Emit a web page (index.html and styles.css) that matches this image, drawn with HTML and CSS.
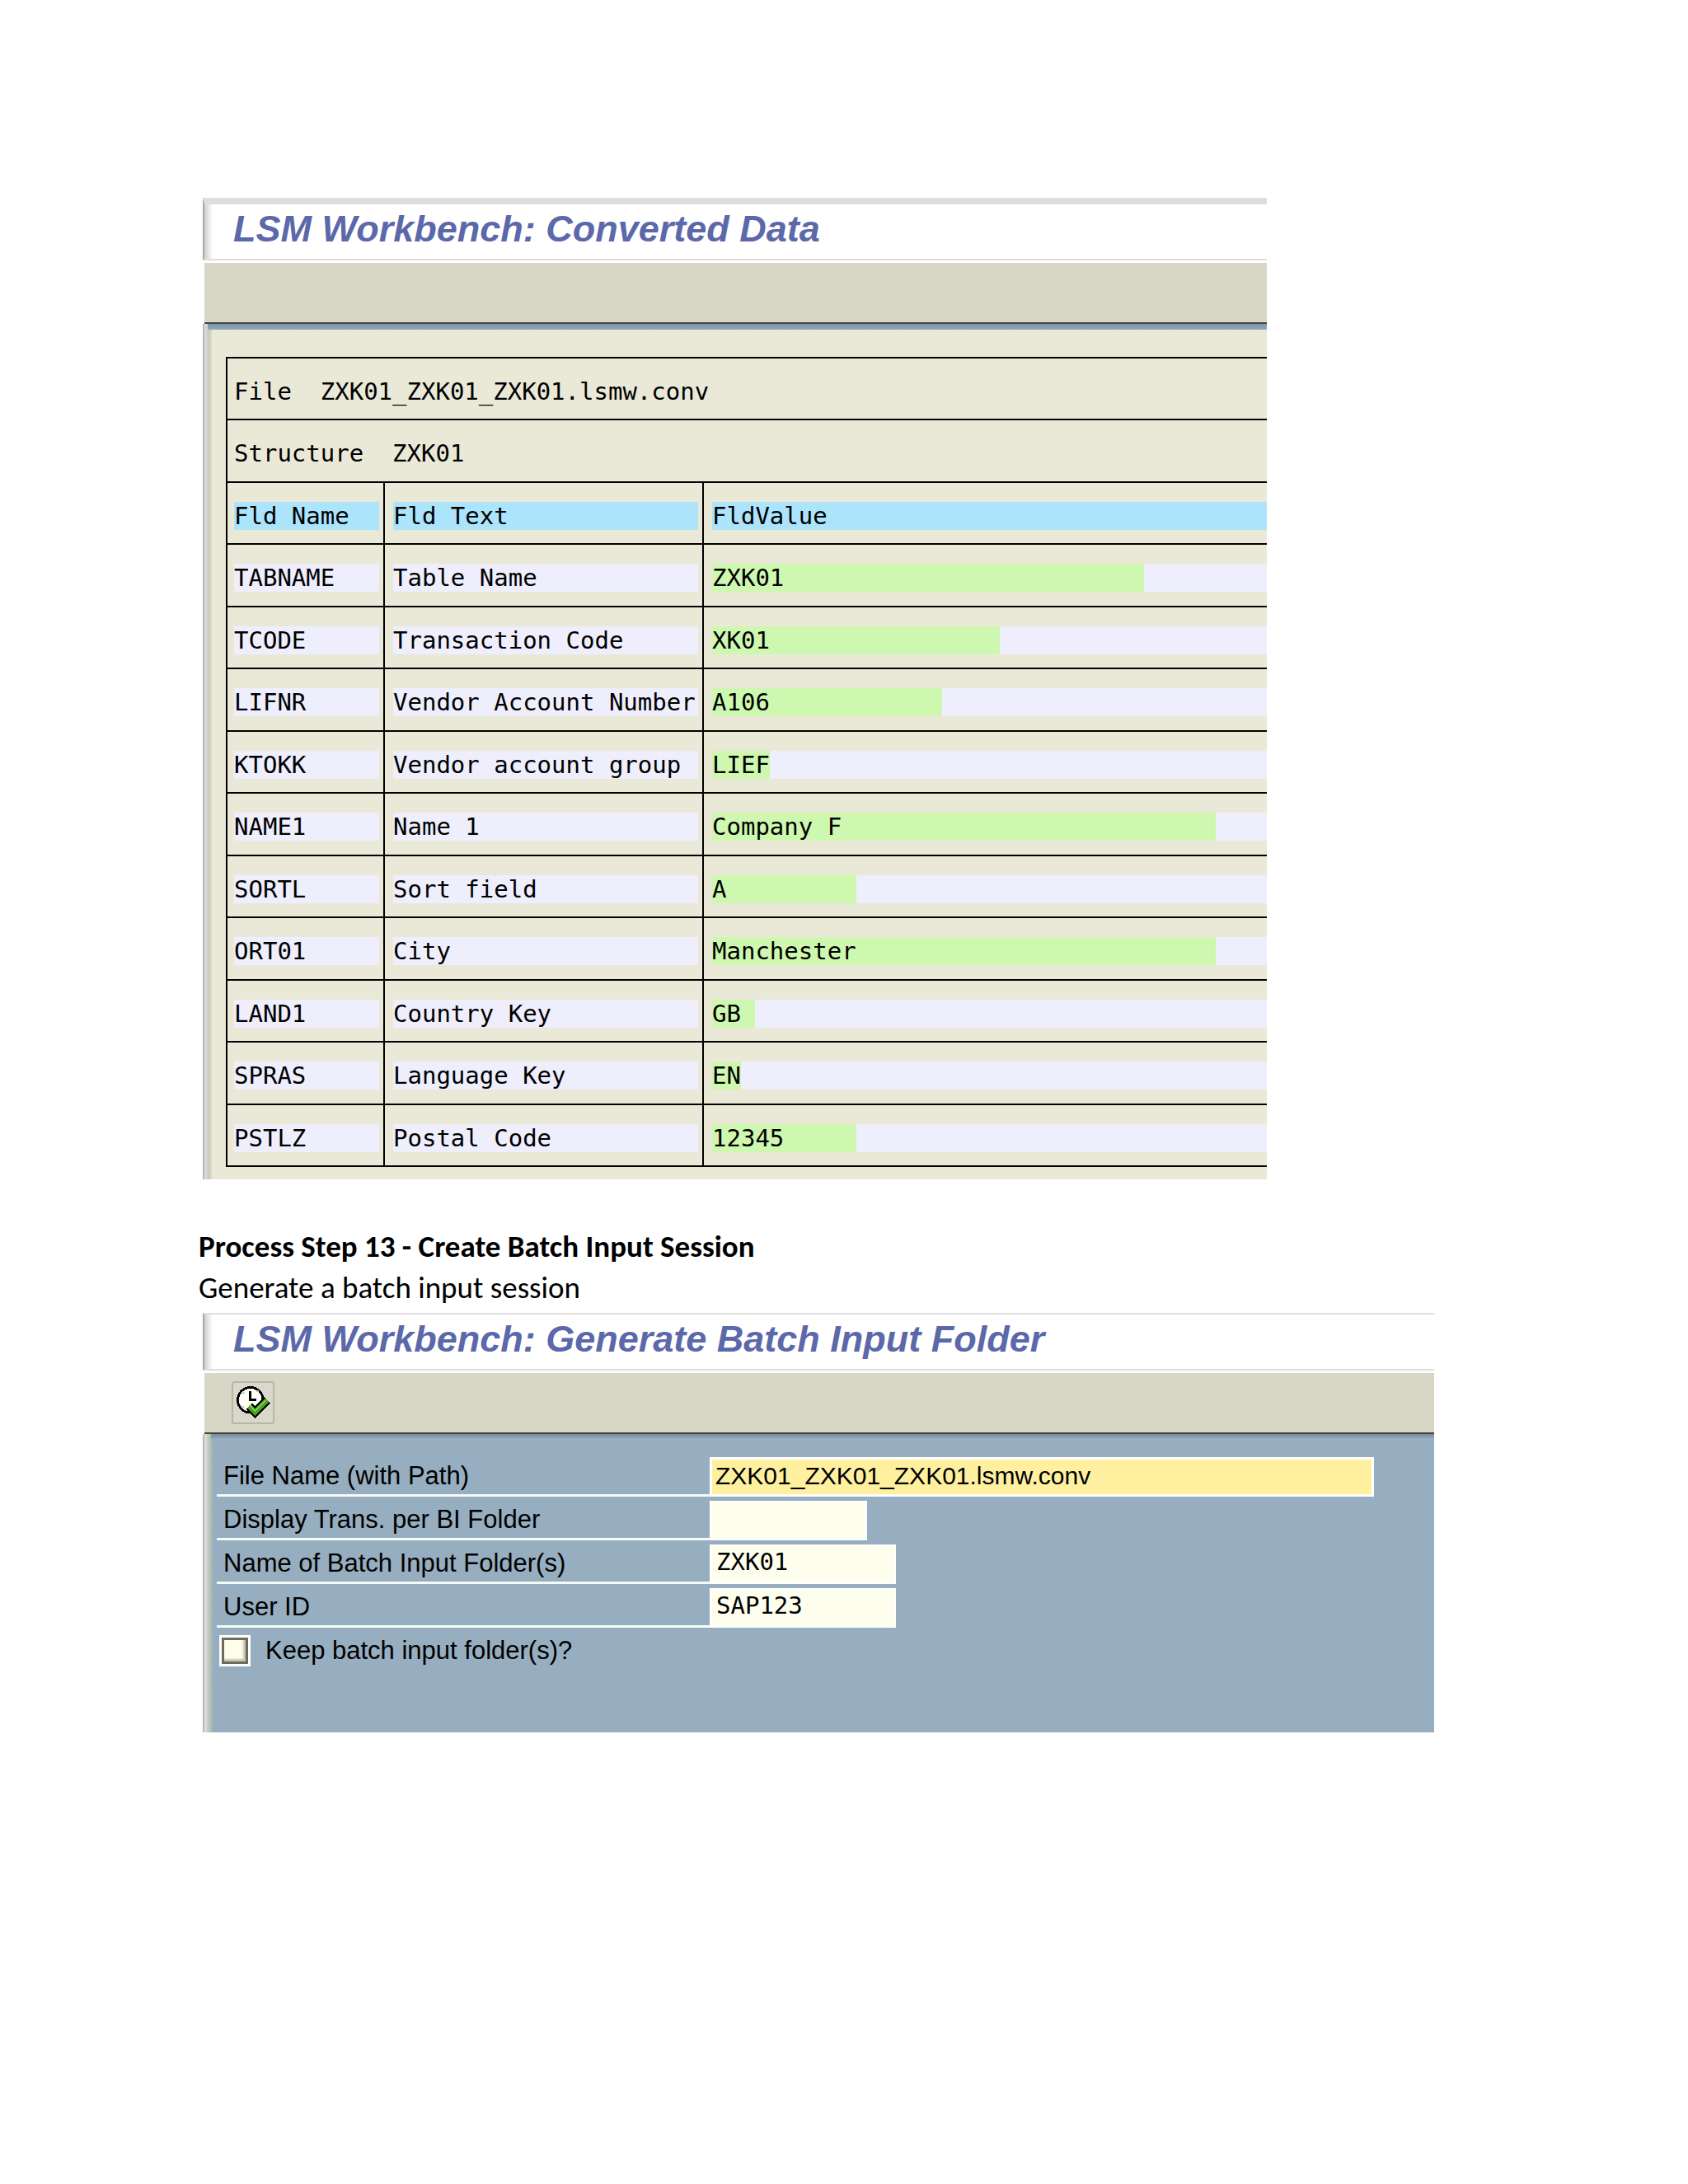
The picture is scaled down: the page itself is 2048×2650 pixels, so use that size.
FILE: index.html
```html
<!DOCTYPE html>
<html lang="en">
<head>
    <meta charset="UTF-8">
    <meta name="viewport" content="width=device-width, initial-scale=1.0">
    <title>LSM Workbench - Create Batch Input Session</title>
    <link rel="stylesheet" href="styles.css">
</head>
<body>
    <main class="page">
        <section class="window converted">
            <h2 class="title-bar">LSM Workbench: Converted Data</h2>
            <div class="toolbar"></div>
            <div class="list-area">
                <table class="data-table">
                    <colgroup>
                        <col class="col-name">
                        <col class="col-text">
                        <col>
                    </colgroup>
                    <tbody>
                        <tr><td colspan="3">File  ZXK01_ZXK01_ZXK01.lsmw.conv</td></tr>
                        <tr><td colspan="3">Structure  ZXK01</td></tr>
                        <tr>
                            <th><span class="cell">Fld Name</span></th>
                            <th><span class="cell">Fld Text</span></th>
                            <th><span class="cell">FldValue</span></th>
                        </tr>
                        <!-- green part = defined length of the field in characters -->
                        <tr>
                            <td><span class="cell">TABNAME</span></td>
                            <td><span class="cell">Table Name</span></td>
                            <td><span class="cell"><span class="value" style="width: 30ch">ZXK01</span></span></td>
                        </tr>
                        <tr>
                            <td><span class="cell">TCODE</span></td>
                            <td><span class="cell">Transaction Code</span></td>
                            <td><span class="cell"><span class="value" style="width: 20ch">XK01</span></span></td>
                        </tr>
                        <tr>
                            <td><span class="cell">LIFNR</span></td>
                            <td><span class="cell">Vendor Account Number</span></td>
                            <td><span class="cell"><span class="value" style="width: 16ch">A106</span></span></td>
                        </tr>
                        <tr>
                            <td><span class="cell">KTOKK</span></td>
                            <td><span class="cell">Vendor account group</span></td>
                            <td><span class="cell"><span class="value" style="width: 4ch">LIEF</span></span></td>
                        </tr>
                        <tr>
                            <td><span class="cell">NAME1</span></td>
                            <td><span class="cell">Name 1</span></td>
                            <td><span class="cell"><span class="value" style="width: 35ch">Company F</span></span></td>
                        </tr>
                        <tr>
                            <td><span class="cell">SORTL</span></td>
                            <td><span class="cell">Sort field</span></td>
                            <td><span class="cell"><span class="value" style="width: 10ch">A</span></span></td>
                        </tr>
                        <tr>
                            <td><span class="cell">ORT01</span></td>
                            <td><span class="cell">City</span></td>
                            <td><span class="cell"><span class="value" style="width: 35ch">Manchester</span></span></td>
                        </tr>
                        <tr>
                            <td><span class="cell">LAND1</span></td>
                            <td><span class="cell">Country Key</span></td>
                            <td><span class="cell"><span class="value" style="width: 3ch">GB</span></span></td>
                        </tr>
                        <tr>
                            <td><span class="cell">SPRAS</span></td>
                            <td><span class="cell">Language Key</span></td>
                            <td><span class="cell"><span class="value" style="width: 2ch">EN</span></span></td>
                        </tr>
                        <tr>
                            <td><span class="cell">PSTLZ</span></td>
                            <td><span class="cell">Postal Code</span></td>
                            <td><span class="cell"><span class="value" style="width: 10ch">12345</span></span></td>
                        </tr>
                    </tbody>
                </table>
            </div>
        </section>

        <h1>Process Step 13 - Create Batch Input Session</h1>
        <p>Generate a batch input session</p>

        <section class="window generate">
            <h2 class="title-bar">LSM Workbench: Generate Batch Input Folder</h2>
            <div class="toolbar">
                <button class="execute" type="submit" form="batchForm" aria-label="Execute">
                    <svg viewBox="0 0 22 22" shape-rendering="crispEdges" fill="none">
                        <circle cx="9.5" cy="9.5" r="7" fill="#fffef8" stroke="#000" stroke-width="1.3"/>
                        <path stroke="#c9c8dc" d="M5 5.5h1.5M13 4.5h1M4.5 13.5H6M9 12.5h1"/>
                        <path stroke="#000" stroke-width="1.2" d="M9.5 4.5v5H13"/>
                        <path stroke="#000" stroke-width="5" d="M9 13l3.2 3.2 6.6-6.6"/>
                        <path stroke="#fffef8" stroke-width="1.2" d="M8.500 12l3.500 3 4-4"/>
                        <path stroke="#48a020" stroke-width="3" d="M9 13l3.200 3.200 6.600-6.600"/>
                        <path stroke="#86d850" stroke-width=".8" d="M9 12.500l3.200 3 6-6"/>
                    </svg>
                </button>
            </div>
            <form class="form-area" id="batchForm">
                <div class="field">
                    <label for="fileName">File Name (with Path)</label>
                    <input class="file-name" id="fileName" type="text" value="ZXK01_ZXK01_ZXK01.lsmw.conv">
                </div>
                <div class="field">
                    <label for="transCount">Display Trans. per BI Folder</label>
                    <input class="trans-count" id="transCount" type="text">
                </div>
                <div class="field">
                    <label for="folderName">Name of Batch Input Folder(s)</label>
                    <input id="folderName" type="text" value="ZXK01">
                </div>
                <div class="field">
                    <label for="userId">User ID</label>
                    <input id="userId" type="text" value="SAP123">
                </div>
                <div class="check">
                    <input id="keepFolder" type="checkbox">
                    <label for="keepFolder">Keep batch input folder(s)?</label>
                </div>
            </form>
        </section>
    </main>
</body>
</html>
```
FILE: styles.css
```css
* {
    box-sizing: border-box;
}
body {
    margin: 0;
    background: #fff;
    color: #000;
    font-family: 'Liberation Sans', Arial, sans-serif;
}
.page {
    padding: 240px 240px 160px;
}
.window {
    margin-left: 6px;
}
.converted {
    max-width: 1291px;
}
.generate {
    max-width: 1494px;
}
.title-bar {
    margin: 0;
    padding: 0 0 6px 35px;
    border-left: 2px solid #a8a8a8;
    border-bottom: 2px solid #dcdcdc;
    background: linear-gradient(to right, #cfcfcf, #fff 10px);
    color: #5b68a9;
    font-size: 45px;
    font-style: italic;
    font-weight: bold;
    line-height: 60px;
}
.converted .title-bar {
    border-top: 8px solid #dedede;
}
.generate .title-bar {
    border-top: 2px solid #dedede;
}
.toolbar {
    height: 74px;
    margin: 3px 0 0 2px;
    padding: 10px 33px;
    border-bottom: 2px solid #45453f;
    background: #d8d6c6;
}
.execute {
    display: block;
    width: 52px;
    height: 52px;
    padding: 0;
    border: 2px solid #b8b6a6;
    border-radius: 3px;
    background: #dad8ca;
}
.execute svg {
    display: block;
    width: 48px;
    height: 48px;
}

/* list output */
.list-area {
    padding: 40px 0 15px 26px;
    border-left: 2px solid #b4b8b8;
    background:
        linear-gradient(#7b97a8, #8ea9b6) 4px 0 / 100% 7px no-repeat,
        linear-gradient(to right, #dcdfdc, #c8cabc 6px, #eae9d8 10px);
}
.data-table {
    width: 100%;
    table-layout: fixed;
    border-spacing: 0;
    border-top: 2px solid #000;
    font-family: 'DejaVu Sans Mono', monospace;
    font-size: 29px;
    line-height: 34px;
}
.col-name {
    width: 191px;
}
.col-text {
    width: 387px;
}
.data-table td,
.data-table th {
    padding: 23px 5px 16px 10px;
    border-left: 2px solid #000;
    border-bottom: 2px solid #000;
    font-weight: normal;
    text-align: left;
    white-space: pre;
}
.data-table tr:nth-child(even) > * {
    padding-bottom: 17px;
}
.data-table tr > :first-child {
    padding-left: 8px;
}
.data-table tr > :nth-child(3) {
    padding-right: 0;
}
.cell {
    display: block;
    height: 34px;
    background: #eeeefc;
}
th .cell {
    background: #ace4fc;
}
.value {
    display: block;
    background: #cef7b0;
}

/* text between the screens */
h1,
p {
    margin: 0;
    padding-left: 1px;
    font-family: Carlito, Calibri, Lato, sans-serif;
    font-size: 37px;
    line-height: 50px;
}
h1 {
    margin-top: 57px;
}
p {
    margin-bottom: 5px;
}

/* selection screen */
.form-area {
    display: flex;
    flex-direction: column;
    gap: 5px;
    padding: 28px 0 80px 15px;
    border-left: 2px solid #b4b8b8;
    background:
        linear-gradient(#74899a, #96aebf) 8px 0 / 100% 6px no-repeat,
        linear-gradient(to right, #e4e4e0, #bcc4b4 6px, #96aebf 11px);
}
.field {
    display: flex;
}
.field label {
    width: 598px;
    padding-left: 8px;
    border-bottom: 3px solid #f4fbf8;
    font-size: 31px;
    line-height: 45px;
}
.field input {
    width: 226px;
    height: 48px;
    padding: 0 6px 6px;
    border: 2px solid #fff;
    border-radius: 0;
    background: #fdfeee;
    color: #000;
    font-family: 'DejaVu Sans Mono', monospace;
    font-size: 29px;
}
.field .file-name {
    width: 806px;
    padding: 0 4px 2px;
    border-width: 3px;
    background: #fff0a0;
    font-family: 'Liberation Sans', Arial, sans-serif;
    font-size: 30px;
}
.field .trans-count {
    width: 191px;
}
.check {
    display: flex;
    align-items: center;
    gap: 18px;
    padding: 4px 0 0 3px;
    font-size: 31px;
    line-height: 38px;
}
.check input {
    appearance: none;
    width: 38px;
    height: 38px;
    margin: 0;
    border: 3px solid #fff;
    outline: 3px solid #6e6a60;
    outline-offset: -6px;
    background: #fdfdea;
    box-shadow: inset -6px -6px 2px #c8c4b0;
}
```
